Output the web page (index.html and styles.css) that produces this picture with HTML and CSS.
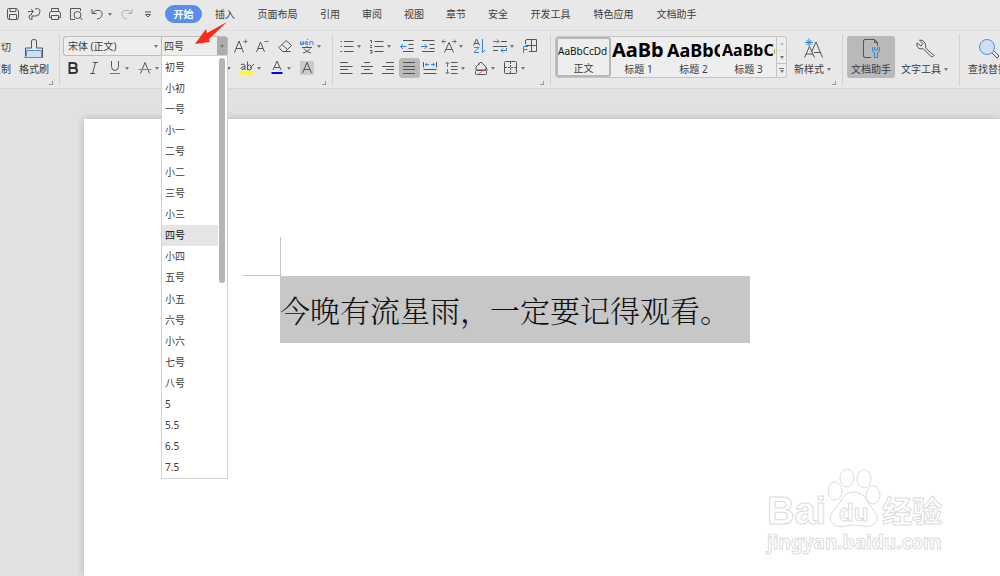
FILE: index.html
```
<!DOCTYPE html>
<html lang="zh-CN">
<head>
  <meta charset="UTF-8" />
  <meta name="viewport" content="width=device-width, initial-scale=1.0"/>
  <title>文字文稿</title>
  <link rel="stylesheet" href="styles.css">
</head>
<body>

<header class="menubar">
  <div class="quick">
    <button aria-label="保存"><svg class="ico" viewBox="0 0 16 16"><path d="M3.500 2.500h8l2 2v7q0 2-2 2h-7q-2 0-2-2v-8q0-1 1-1zM5 2.500v3h6v-3M4.500 13.500v-5h7v5"/></svg></button>
    <button aria-label="导出"><svg class="ico" viewBox="0 0 16 16"><path d="M2 5.500h5M5 3l2.500 2.500L5 8M9 3q5-1.500 5 2.500T10 10H6M6 8.500q-3 0-3 2.500t3 2.500V10"/></svg></button>
    <button aria-label="打印"><svg class="ico" viewBox="0 0 16 16"><path d="M4.500 5.500v-3h7v3M4.500 11.500h-2v-4q0-2 2-2h7q2 0 2 2v4h-2M4.500 9.500h7v4h-7z"/></svg></button>
    <button aria-label="打印预览"><svg class="ico" viewBox="0 0 16 16"><path d="M7 13.500H2.500v-11h10V5M12 11.500l2.500 2.500"/><circle cx="9.500" cy="9" r="3.500"/></svg></button>
    <button class="wide" aria-label="撤销"><svg class="ico" viewBox="0 0 16 16"><path d="M3 3v4.500h4.500M3.500 7q3-4 7-2.500t2 6Q11 13 8 13"/></svg><i class="caret"></i></button>
    <button class="faded" aria-label="恢复"><svg class="ico" viewBox="0 0 16 16"><path d="M13 3v4.500H8.500M12.500 7q-3-4-7-2.500t-2 6Q5 13 8 13"/></svg></button>
    <button aria-label="更多"><svg class="ico" viewBox="0 0 16 16"><path d="M5 6h6M5.500 8.500h5L8 11z"/></svg></button>
  </div>
  <nav class="tabs">
    <a class="active" href="#">开始</a>
    <a href="#">插入</a>
    <a class="wide" href="#">页面布局</a>
    <a href="#">引用</a>
    <a href="#">审阅</a>
    <a href="#">视图</a>
    <a href="#">章节</a>
    <a href="#">安全</a>
    <a class="wide" href="#">开发工具</a>
    <a class="wide" href="#">特色应用</a>
    <a class="wide" href="#">文档助手</a>
  </nav>
</header>

<section class="ribbon">
  <div class="group clipboard">
    <div class="cut">
      <button>剪切</button>
      <button>复制</button>
    </div>
    <button class="big"><svg class="bigico" viewBox="0 0 22 22"><path d="M8.500 10V3q0-1.500 2.500-1.500T13.500 3v7h6v9.500h-17V10z"/><path class="tint" d="M3.500 12.500h15v7H1.500q2-1 2-3z"/></svg><span>格式刷</span></button>
    <i class="launch"></i>
  </div>

  <div class="group font">
    <div class="row combos">
      <div class="combo family">
        <input type="text" aria-label="字体" value="宋体 (正文)">
        <button aria-label="选择字体"><i class="caret"></i></button>
      </div>
      <div class="combo size">
        <input type="text" aria-label="字号" value="四号">
        <button class="open" aria-label="选择字号"><i class="caret"></i></button>
        <div class="sizes">
          <ul role="listbox" aria-label="字号">
            <li role="option">初号</li>
            <li role="option">小初</li>
            <li role="option">一号</li>
            <li role="option">小一</li>
            <li role="option">二号</li>
            <li role="option">小二</li>
            <li role="option">三号</li>
            <li role="option">小三</li>
            <li role="option" class="selected" aria-selected="true">四号</li>
            <li role="option">小四</li>
            <li role="option">五号</li>
            <li role="option">小五</li>
            <li role="option">六号</li>
            <li role="option">小六</li>
            <li role="option">七号</li>
            <li role="option">八号</li>
            <li role="option">5</li>
            <li role="option">5.5</li>
            <li role="option">6.5</li>
            <li role="option">7.5</li>
          </ul>
          <div class="thumb"></div>
        </div>
        <svg class="arrow" viewBox="0 0 34 24"><path d="M1 22L12 7l1 4L33 0 15 17l1 3z"/></svg>
      </div>
      <button class="tool" aria-label="增大字号"><svg class="ico" viewBox="0 0 16 16"><path d="M1.500 14.500L6 3l4.500 11.500M3 10.500h6"/><path class="blue" d="M10.500 3.500h4M12.500 1.500v4"/></svg></button>
      <button class="tool" aria-label="减小字号"><svg class="ico" viewBox="0 0 16 16"><path d="M1.500 14l4-10 4 10M3 10.500h5"/><path class="blue" d="M9.500 3.500h4"/></svg></button>
      <button class="tool" aria-label="清除格式"><svg class="ico" viewBox="0 0 16 16"><path d="M9 2.500l5.500 5-6 6H5.500l-3.500-4zM5 6.500l5.500 5M5.500 13.500h8"/></svg></button>
      <button class="tool drop" aria-label="拼音指南"><svg class="ico" viewBox="0 0 16 16"><path class="blue" d="M1.500 3.500v3h3v-3M3 3.500v3M6 5h3q0-1.500-1.500-1.500T6 5t1.500 1.500H9M8 2l1-1M11 7V3.500h1.500q1.500 0 1.500 1V7"/><path d="M3 9.500h10M8 8v1.500M5 10.500q2 3.500 7 4.500M11 10.500q-2 3.500-7 4.500"/></svg><i class="caret"></i></button>
    </div>
    <div class="row">
      <button class="tool" aria-label="加粗"><svg class="ico" viewBox="0 0 16 16"><path class="heavy" d="M4.500 3h4q3 0 3 2.500T8.500 8h-4zM4.500 8h4.500q3 0 3 2.500T9 13H4.500z"/></svg></button>
      <button class="tool" aria-label="倾斜"><svg class="ico" viewBox="0 0 16 16"><path d="M7 2.500h5M4 13.500h5M9.500 2.500l-3 11"/></svg></button>
      <button class="tool drop" aria-label="下划线"><svg class="ico" viewBox="0 0 16 16"><path d="M4.500 1v5.500q0 4 3.500 4t3.500-4V1"/><path class="blue" d="M3 13.500h10"/></svg><i class="caret"></i></button>
      <button class="tool drop" aria-label="删除线"><svg class="ico" viewBox="0 0 16 16"><path d="M3.500 13.500L8 2.500l4.500 11"/><path class="red" d="M1.500 9.500h13"/></svg><i class="caret"></i></button>
      <button class="tool" aria-label="上标"><svg class="ico" viewBox="0 0 16 16"><path d="M2 5l7 8M9 5l-7 8M11 3h3v2h-3v2h3"/></svg></button>
      <button class="tool" aria-label="下标"><svg class="ico" viewBox="0 0 16 16"><path d="M2 3l7 8M9 3l-7 8M11 10h3v2h-3v2h3"/></svg></button>
      <button class="tool drop" aria-label="文字效果"><svg class="ico" viewBox="0 0 16 16"><path class="blue" d="M3 13L8 3l5 10M5 9.500h6"/></svg><i class="caret"></i></button>
      <button class="tool drop" aria-label="突出显示"><svg class="ico" viewBox="0 0 16 16"><path d="M2 4.500q4-1.500 4 1V10M6 6.500q-4 0-4 2t4 0M8.500 1.500V10M8.500 7q0-2 2-2t2 2.500-2 2.500-2-2M11 8l4-4"/><path class="mark" d="M1 13h13"/></svg><i class="caret"></i></button>
      <button class="tool drop" aria-label="字体颜色"><svg class="ico" viewBox="0 0 16 16"><path d="M4 10l4-9 4 9M5.500 7.500h5"/><path class="ink" d="M2.500 13h11"/></svg><i class="caret"></i></button>
      <button class="tool" aria-label="字符底纹"><svg class="ico" viewBox="0 0 16 16"><path class="shade" d="M1 1h14v14H1z"/><path d="M3.500 13L8 2.500 12.500 13M5 9.500h6"/></svg></button>
    </div>
    <i class="launch"></i>
  </div>

  <div class="group para">
    <div class="row spaced">
      <button class="tool drop" aria-label="项目符号"><svg class="ico" viewBox="0 0 16 16"><path d="M5 3.500h9.500M5 8.500h9.500M5 13.500h9.500M1.500 3.500H3M1.500 8.500H3M1.500 13.500H3"/></svg><i class="caret"></i></button>
      <button class="tool drop" aria-label="编号"><svg class="ico" viewBox="0 0 16 16"><path d="M5.500 3.500h9M5.500 8.500h9M5.500 13.500h9M1 2.500h1.500V5M1 7.500h2M1 9.500h2M1 12.500h2V15H1"/></svg><i class="caret"></i></button>
      <button class="tool" aria-label="减少缩进"><svg class="ico" viewBox="0 0 16 16"><path d="M4 2.500h10.500M9.500 6.500h5M9.500 10.500h5M4 13.500h10.500"/><path class="blue" d="M7.500 8.500h-6M4 6L1.500 8.500 4 11"/></svg></button>
      <button class="tool" aria-label="增加缩进"><svg class="ico" viewBox="0 0 16 16"><path d="M2 2.500h12.500M9.500 6.500h5M9.500 10.500h5M2 13.500h12.500"/><path class="blue" d="M1 8.500h6M4.500 6L7 8.500 4.500 11"/></svg></button>
      <button class="tool drop" aria-label="中文版式"><svg class="ico" viewBox="0 0 16 16"><path d="M3.500 14.500L8 4.500l4.500 10M5 11.500h6"/><path class="blue" d="M5 3.500H1M3 1.500l-2 2 2 2M11 3.500h4M13 1.500l2 2-2 2"/></svg><i class="caret"></i></button>
      <button class="tool" aria-label="排序"><svg class="ico" viewBox="0 0 16 16"><path d="M2.500 7.500l3-6.500 3 6.500M3.500 5.500h4"/><path class="blue" d="M3 9.500h5l-5 5h5M11.500 1v13.500l2.500-2.500"/></svg></button>
      <button class="tool drop" aria-label="显示编辑标记"><svg class="ico" viewBox="0 0 16 16"><path d="M9 3.500h6M1 8.500h14M1 12.500h5"/><path class="blue" d="M1 3.500h6M5 1.500l2 2-2 2M14.500 10v2.500H9M11 10.500l-2 2 2 2"/></svg><i class="caret"></i></button>
      <button class="tool" aria-label="制表位"><svg class="ico" viewBox="0 0 16 16"><path d="M3.500 6V3q0-1.500 1.500-1.500h9.500v12H7M9.500 1.500v12M3.500 7.500h11"/><path class="blue" d="M1.500 15V8.500H6M1.500 11.500h4"/></svg></button>
    </div>
    <div class="row">
      <button class="tool" aria-label="左对齐"><svg class="ico" viewBox="0 0 16 16"><path d="M2 2.500h8M2 6.500h12.500M2 9.500h8M2 13.500h12.500"/></svg></button>
      <button class="tool" aria-label="居中对齐"><svg class="ico" viewBox="0 0 16 16"><path d="M5 2.500h6M2 6.500h12M5 9.500h6M2 13.500h12"/></svg></button>
      <button class="tool" aria-label="右对齐"><svg class="ico" viewBox="0 0 16 16"><path d="M6 2.500h8M2 6.500h12M6 9.500h8M2 13.500h12"/></svg></button>
      <button class="tool pressed" aria-label="两端对齐"><svg class="ico" viewBox="0 0 16 16"><path d="M2 2.500h12M2 6.500h12M2 9.500h12M2 13.500h12"/></svg></button>
      <button class="tool" aria-label="分散对齐"><svg class="ico" viewBox="0 0 16 16"><path d="M1.500 2v5.500M14.500 2v5.500M1.500 9.500h13M1.500 13.500h13"/><path class="blue" d="M7 4.500H3.500M5 3L3.500 4.500 5 6M9 4.500h3.500M11 3l1.500 1.500L11 6"/></svg></button>
      <button class="tool drop" aria-label="行距"><svg class="ico" viewBox="0 0 16 16"><path d="M8 2.500h6.500M8 6.500h6.500M8 9.500h6.500M8 13.500h6.500"/><path class="blue" d="M4.500 7V2M2.500 4l2-2 2 2M4.500 9v5M2.500 12l2 2 2-2"/></svg><i class="caret"></i></button>
      <button class="tool drop" aria-label="底纹颜色"><svg class="ico" viewBox="0 0 16 16"><path d="M3 7l5-5 5 5v3H3zM6 2.500V5M13 7.500l1.500 3"/><rect x="2.500" y="10.500" width="11" height="4" rx="1"/><path class="red" d="M5 14.500l5-4"/></svg><i class="caret"></i></button>
      <button class="tool drop" aria-label="边框"><svg class="ico" viewBox="0 0 16 16"><rect x="1.500" y="1.500" width="12" height="12" rx="1"/><path d="M7.500 2v11M2 7.500h11" stroke-dasharray="2 1"/></svg><i class="caret"></i></button>
    </div>
    <i class="launch"></i>
  </div>

  <div class="group styles">
    <div class="gallery">
      <button class="style current"><span class="sample">AaBbCcDd</span><span>正文</span></button>
      <button class="style"><span class="sample h1">AaBb</span><span>标题 1</span></button>
      <button class="style"><span class="sample h2">AaBbC</span><span>标题 2</span></button>
      <button class="style"><span class="sample h3">AaBbCc</span><span>标题 3</span></button>
      <div class="scroll">
        <button class="faded" aria-label="上一行"><i class="caret up"></i></button>
        <button aria-label="下一行"><i class="caret"></i></button>
        <button class="more" aria-label="更多样式"><i class="caret"></i></button>
      </div>
    </div>
    <button class="big"><svg class="bigico" viewBox="0 0 22 22"><path d="M2.500 19.500l5-11 5 11M4 16h7M9.500 14L14 4l6.500 15.500M12 14.500h6.500"/><path class="blue" d="M7 .500v8M3 4.500h8M4.500 2l5 5M9.500 2l-5 5"/></svg><span>新样式<i class="caret"></i></span></button>
    <i class="launch"></i>
  </div>

  <div class="group helpers">
    <button class="big pressed"><svg class="bigico" viewBox="0 0 22 22"><path d="M11 19.500H5q-1.500 0-1.500-1.500V3q0-1.500 1.500-1.500h9.500l3 3V8M14.500 1.500v3h3"/><path class="blue" d="M12.500 9v3q0 2 2 2.500v5h3v-5q2-.500 2-2.500V9M14.500 9v3h3V9"/></svg><span>文档助手</span></button>
    <button class="big"><svg class="bigico" viewBox="0 0 22 22"><path d="M3 5q-1 5 4 6l2-.500 8 8q2 1 3-1l-8.500-7.500q1-5-3-7.500L5.500 2 9 5.500 7 8z"/></svg><span>文字工具<i class="caret"></i></span></button>
  </div>

  <div class="group find">
    <button class="big"><svg class="bigico" viewBox="0 0 22 22"><circle class="tint" cx="10" cy="9" r="7.500"/><path d="M15 15l5 5 2-2-5-5"/></svg><span>查找替换</span></button>
  </div>
</section>

<main class="workspace">
  <article class="paper">
    <div class="corner"></div>
    <p class="line"><span>今晚有流星雨，一定要记得观看。</span></p>
    <svg class="watermark" viewBox="0 0 190 96">
      <text class="brand" x="5" y="60">Bai</text>
      <ellipse cx="73" cy="27" rx="7" ry="9"/>
      <ellipse cx="85" cy="14" rx="7" ry="9"/>
      <ellipse cx="102" cy="15" rx="7" ry="9"/>
      <ellipse cx="111" cy="31" rx="7" ry="9"/>
      <path d="M92 28q8 0 12 7t8 12q6 7 1 12t-12 3q-9-2-18 0-9 2-13-3t1-12q5-5 9-12t12-7z"/>
      <text class="du" x="77" y="57">du</text>
      <text class="zh" x="120" y="58">经验</text>
      <text class="url" x="5" y="85">jingyan.baidu.com</text>
    </svg>
  </article>
</main>

</body>
</html>
```

FILE: styles.css
```
* {
  margin: 0; padding: 0;
  box-sizing: border-box;
}
body {
  height: 100vh;
  display: flex;
  flex-direction: column;
  overflow: hidden;
  background: #e1e1e1;
  color: #3c3c3c;
  font: 10px/14px "Noto Sans", "Noto Sans CJK SC", sans-serif;
}
button, input {
  font: inherit;
  color: inherit;
  border: none;
  background: none;
}
a {
  color: inherit;
  text-decoration: none;
}
ul {
  list-style: none;
}

/* icons */
.ico {
  width: 16px;
  height: 16px;
  flex: none;
}
.bigico {
  width: 22px;
  height: 22px;
}
.ico, .bigico {
  fill: none;
  stroke: #555;
  stroke-width: 1;
}
.ico .blue, .bigico .blue {
  stroke: #2f86d8;
}
.ico .red {
  stroke: #e06060;
}
.ico .heavy {
  stroke: #333;
  stroke-width: 2;
}
.ico .mark {
  stroke: #ff0;
  stroke-width: 3;
}
.ico .ink {
  stroke: #00f;
  stroke-width: 2;
}
.ico .shade {
  fill: #cbcbcb;
  stroke: none;
}
.bigico .tint {
  fill: #cfdfef;
  stroke: #4a90d9;
}
.caret {
  width: 0;
  height: 0;
  border: 2px solid transparent;
  border-top: 3px solid #777;
  border-bottom: none;
  flex: none;
}
.caret.up {
  transform: rotate(180deg);
}
.faded {
  opacity: 0.4;
}

/* top bar */
.menubar {
  display: flex;
  align-items: center;
  height: 30px;
  padding: 0 0 2px 3px;
  background: #e8e8e8;
}
.quick {
  display: flex;
  width: 162px;
}
.quick button {
  display: flex;
  align-items: center;
  width: 21px;
  padding-left: 2px;
}
.quick .wide {
  width: 30px;
}
.quick .wide .caret {
  margin-left: 3px;
}
.tabs {
  display: flex;
}
.tabs a {
  width: 42px;
  line-height: 18px;
  text-align: center;
}
.tabs .wide {
  width: 63px;
}
.tabs .active {
  width: 37px;
  margin-right: 2px;
  border-radius: 9px;
  background: #5b8ee6;
  color: #fff;
  font-weight: bold;
}

/* ribbon */
.ribbon {
  display: flex;
  height: 59px;
  flex: none;
  padding: 3px 0 2px;
  border-top: 1px solid #dedede;
  border-bottom: 1px solid #d6d6d6;
  background: #e8e8e8;
}
.group {
  position: relative;
  flex: none;
  border-right: 1px solid #d2d2d2;
}
.launch {
  position: absolute;
  right: 6px;
  bottom: 1px;
  width: 4px;
  height: 4px;
  border: solid #999;
  border-width: 0 1px 1px 0;
}
.row {
  display: flex;
  align-items: center;
  height: 22px;
}
.spaced {
  padding-left: 1px;
}
.tool {
  display: flex;
  align-items: center;
  width: 21px;
  height: 20px;
  padding-left: 2px;
}
.tool.drop {
  width: 30px;
  gap: 2px;
}
.pressed {
  border-radius: 3px;
  background: #b9b9b9;
}
.big {
  display: flex;
  flex-direction: column;
  align-items: center;
  height: 42px;
  padding: 2px 4px;
  gap: 2px;
  white-space: nowrap;
}
.big span {
  display: flex;
  align-items: center;
}
.big .caret {
  margin-left: 3px;
}
.clipboard {
  display: flex;
  gap: 4px;
  width: 60px;
  padding-top: 2px;
}
.cut {
  display: flex;
  flex-direction: column;
  align-items: flex-end;
  width: 11px;
  gap: 8px;
  padding-top: 4px;
}
.cut button {
  white-space: nowrap;
}
.font {
  width: 273px;
  padding: 1px 0 0 3px;
}
.combo {
  display: flex;
  height: 20px;
  border: 1px solid #bdbdbd;
  background: #ededed;
}
.combos {
  gap: 1px;
}
.combo input {
  flex: 1;
  min-width: 0;
  padding-left: 4px;
}
.combo button {
  display: flex;
  align-items: center;
  justify-content: center;
  width: 10px;
}
.combo .open {
  background: #adadad;
}
.family {
  width: 98px;
  border-right: none;
  border-radius: 3px 0 0 3px;
}
.size {
  position: relative;
  width: 67px;
  margin-left: -1px;
  border-radius: 0 3px 3px 0;
}
.size input {
  padding-left: 2px;
}
.size + .tool {
  margin-left: 2px;
}
.sizes {
  position: absolute;
  top: 18px;
  left: -1px;
  z-index: 2;
  display: flex;
  align-items: flex-start;
  width: 67px;
  height: 424px;
  border: 1px solid #d2d2d2;
  background: #fff;
}
.sizes ul {
  display: flex;
  flex-direction: column;
  flex: 1;
  height: 100%;
}
.sizes li {
  display: flex;
  align-items: center;
  flex: 1;
  padding-left: 3px;
}
.sizes .selected {
  background: #e5e5e5;
  color: #111;
}
.thumb {
  width: 6px;
  height: 225px;
  margin: 2px 2px 0 1px;
  border-radius: 3px;
  background: #b5b5b5;
}
.arrow {
  position: absolute;
  top: -15px;
  left: 32px;
  z-index: 3;
  width: 34px;
  height: 24px;
  fill: #fb2b1c;
}
.para {
  width: 218px;
  padding: 1px 0 0 3px;
}
.styles {
  display: flex;
  width: 292px;
  padding: 2px 0 0 4px;
}
.gallery {
  display: flex;
  width: 232px;
  height: 42px;
  margin-right: 3px;
  border: 1px solid #c4c4c4;
  border-radius: 3px;
  background: #eee;
}
.style {
  display: flex;
  flex-direction: column;
  align-items: center;
  width: 55px;
  overflow: hidden;
  color: #3c3c3c;
}
.style.current {
  border: 2px solid #b7b7b7;
  border-radius: 3px;
}
.sample {
  width: 53px;
  height: 25px;
  overflow: hidden;
  color: #111;
  font-size: 10px;
  line-height: 26px;
  text-align: left;
}
.current .sample {
  width: 51px;
  height: 23px;
  line-height: 24px;
}
.sample.h1, .sample.h2, .sample.h3 {
  color: #000;
  font-weight: bold;
}
.sample.h1 {
  font-size: 20px;
}
.sample.h2 {
  font-size: 18px;
}
.sample.h3 {
  font-size: 16px;
}
.scroll {
  display: flex;
  flex-direction: column;
  flex: 1;
  border-left: 1px solid #c4c4c4;
}
.scroll button {
  display: flex;
  flex-direction: column;
  align-items: center;
  justify-content: center;
  flex: 1;
  border-bottom: 1px solid #c4c4c4;
}
.scroll .more {
  gap: 1px;
  border-bottom: none;
}
.more::before {
  content: '';
  width: 5px;
  height: 1px;
  background: #777;
}
.helpers {
  display: flex;
  gap: 2px;
  width: 117px;
  padding: 2px 0 0 4px;
}
.find {
  padding: 2px 0 0 4px;
  border-right: none;
}

/* document */
.workspace {
  display: flex;
  flex: 1;
  padding: 30px 0 0 84px;
}
.paper {
  position: relative;
  flex: 1;
  padding: 118px 0 0 158px;
  background: #fff;
  box-shadow: 0 0 8px rgba(0,0,0,0.2);
}
.corner {
  width: 39px;
  height: 39px;
  border: solid #c4c4c4;
  border-width: 0 1px 1px 0;
}
.line {
  margin-left: 38px;
  color: #111;
  font-family: "Noto Serif CJK SC", "Noto Sans CJK SC", serif;
  font-size: 30px;
  font-weight: 300;
  line-height: 67px;
}
.line span {
  display: inline-block;
  padding-right: 20px;
  background: #c7c7c7;
}
.watermark {
  position: absolute;
  right: 48px;
  bottom: 16px;
  width: 190px;
  height: 96px;
  fill: #fff;
  stroke: #dcdcdc;
  stroke-width: 1;
  font-weight: bold;
}
.brand {
  font-family: "Liberation Sans", sans-serif;
  font-size: 38px;
}
.du {
  font-family: "Liberation Sans", sans-serif;
  font-size: 24px;
}
.zh {
  font-size: 30px;
}
.url {
  font-size: 19px;
}
```
